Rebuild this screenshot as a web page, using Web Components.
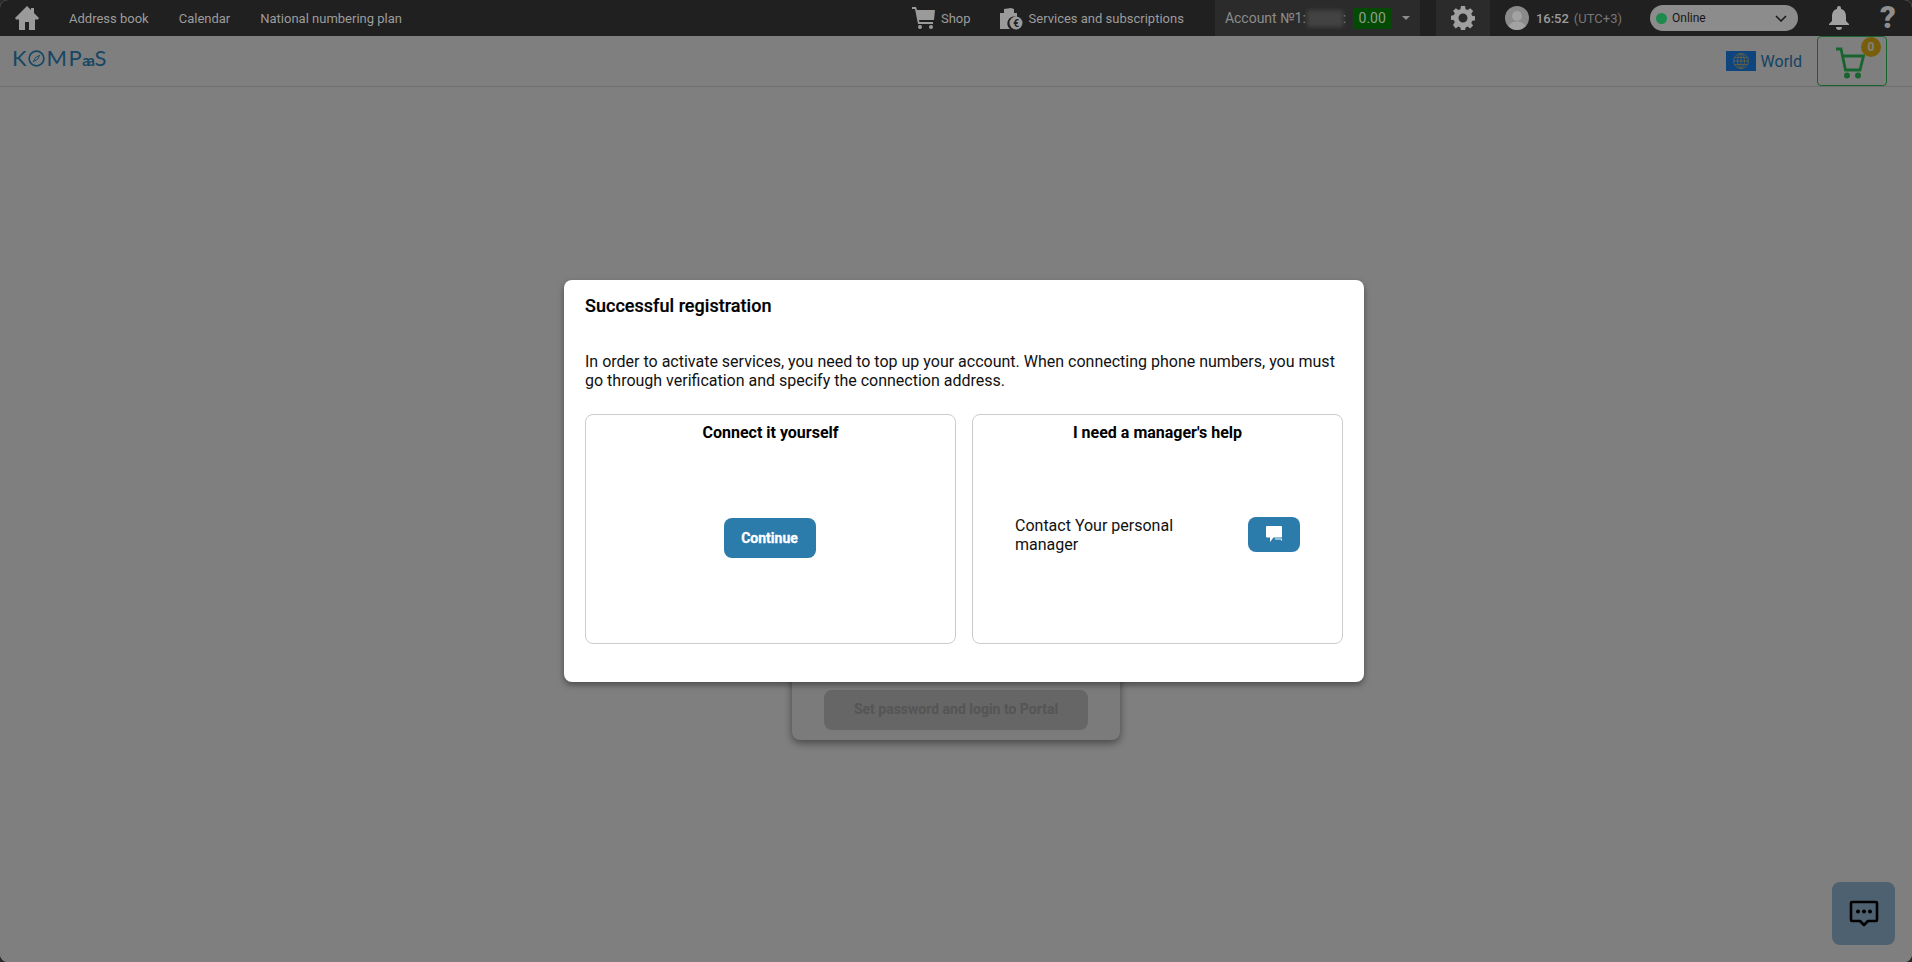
<!DOCTYPE html>
<html lang="en">
<head>
<meta charset="utf-8">
<title>Successful registration</title>
<style>
    html { height: 100%; overflow: hidden; background: #2a2a2a; }
    body { margin: 0; height: 100%; position: relative; overflow: hidden; border-radius: 8px; background: #fff; font-family: Roboto, "Liberation Sans", sans-serif; display: flex; flex-direction: column; }
</style>
</head>
<body>
<app-topbar></app-topbar>
<app-subbar></app-subbar>
<reg-form></reg-form>
<chat-fab></chat-fab>
<reg-modal heading="Successful registration">
    In order to activate services, you need to top up your account. When connecting phone numbers, you must go through verification and specify the connection address.
    <choice-card slot="cards" heading="Connect it yourself">
        <action-button>Continue</action-button>
    </choice-card>
    <choice-card slot="cards" heading="I need a manager's help">
        <manager-contact>Contact Your personal manager</manager-contact>
    </choice-card>
</reg-modal>

<script>
class AppTopbar extends HTMLElement {
    constructor() {
        super();
        this.shadow = this.attachShadow({ mode: 'open' });
    }

    connectedCallback() {
        this.render()
    }

    render() {
        this.shadow.innerHTML = /*html*/ `
            <style>
                :host { display: flex; align-items: center; height: 36px; background: #202020; color: #9c9c9c; font-size: 13px; flex: none; position: relative; z-index: 20; }
                svg { display: block; flex: none; }
                .home { margin-left: 14px; }
                .nav { margin-left: 30px; white-space: nowrap; }
                .nav.first { margin-left: 29px; }
                .spacer { flex: 1; }
                .tool { display: flex; align-items: center; white-space: nowrap; }
                .account { display: flex; align-items: center; height: 36px; width: 205px; box-sizing: border-box; padding-left: 10px; margin-left: 31px; background: #2b2b2b; font-size: 14px; color: #8c8c8c; white-space: nowrap; }
                .blur { display: block; width: 36px; height: 17px; margin-left: 1px; background: #434343; filter: blur(2px); }
                .sum { display: block; margin-left: 7px; width: 38px; height: 21px; line-height: 21px; text-align: center; background: #044a04; color: #8da08d; }
                .caret { margin-left: 11px; width: 0; height: 0; border: 4px solid transparent; border-top: 4px solid #8c8c8c; border-bottom: 0; }
                .gear { display: flex; align-items: center; justify-content: center; width: 54px; height: 36px; margin-left: 16px; background: #2b2b2b; }
                .avatar { margin-left: 15px; }
                .time { margin-left: 7px; font-weight: 500; color: #9c9c9c; }
                .zone { margin-left: 5px; color: #777; }
                .status { display: flex; align-items: center; box-sizing: border-box; width: 148px; height: 26px; margin-left: 28px; padding: 0 11px 0 6px; border-radius: 13px; background: #8c8c8c; color: #161616; font-size: 12px; }
                .dot { width: 11px; height: 11px; border-radius: 50%; background: #1f8a4e; margin-right: 5px; }
                .status span { flex: 1; }
                .bell { margin-left: 31px; }
                .help { margin-left: 28px; margin-right: 13px; width: 22px; text-align: center; font-size: 31px; line-height: 36px; font-weight: 900; color: #8e8e8e; }
            </style>
            <svg class="home" width="26" height="26" viewBox="0 0 26 26"><path fill="#9a9a9a" d="M13 1 1 13l1 1.500h3V25h6v-8h4v8h6V14.500h3L25 13l-5-5V3h-3v2z"/></svg>
            <span class="nav first">Address book</span>
            <span class="nav">Calendar</span>
            <span class="nav">National numbering plan</span>
            <span class="spacer"></span>
            <span class="tool">
                <svg width="23" height="22" viewBox="0 0 23 22"><path fill="#9a9a9a" d="M0 0h4l1 3h18l-1 10H7l.4 2H21v2H6L3 2H0z"/><circle cx="8" cy="20" r="2" fill="#9a9a9a"/><circle cx="19" cy="20" r="2" fill="#9a9a9a"/></svg>
                <span style="margin-left:6px">Shop</span>
            </span>
            <span class="tool" style="margin-left:29px">
                <svg width="23" height="23" viewBox="0 0 23 23"><path fill="#9a9a9a" d="M0 6h4V2l7-1 3 1v4h3v4a7 7 0 0 0-7 12H0z"/><circle cx="16" cy="16" r="6.500" fill="#9a9a9a"/><text x="16" y="19.500" text-anchor="middle" font-size="10" font-weight="700" fill="#202020">€</text></svg>
                <span style="margin-left:6px">Services and subscriptions</span>
            </span>
            <div class="account">
                <span>Account №1:</span><span class="blur"></span><span>:</span><span class="sum">0.00</span><span class="caret"></span>
            </div>
            <div class="gear">
                <svg width="24" height="24" viewBox="0 0 24 24"><path fill="#a0a0a0" fill-rule="evenodd" d="M10 0h4l.6 3.200 2 .8L19.300 2.200l2.800 2.800-1.800 2.700.8 2 3 .6v4l-3 .6-.8 2 1.800 2.700-2.800 2.800-2.700-1.800-2 .8-.6 3.200h-4l-.6-3.200-2-.8-2.700 1.800L2 19l1.800-2.700-.8-2-3-.6v-4l3-.6.8-2L2 5l2.800-2.800L7.400 4l2-.8zM12 7.500a4.500 4.500 0 1 0 0 9 4.500 4.500 0 0 0 0-9z"/></svg>
            </div>
            <svg class="avatar" width="24" height="24" viewBox="0 0 24 24"><circle cx="12" cy="12" r="12" fill="#8a8a8a"/><circle cx="12" cy="10" r="5" fill="#a2a2a2"/><path fill="#a2a2a2" d="M3.500 20.500C5 16.500 8.500 15.500 12 15.500s7 1 8.500 5A12 12 0 0 1 3.500 20.500z"/></svg>
            <span class="time">16:52</span><span class="zone">(UTC+3)</span>
            <div class="status">
                <i class="dot"></i><span>Online</span>
                <svg width="12" height="7" viewBox="0 0 12 7"><path d="M1 1l5 5 5-5" fill="none" stroke="#161616" stroke-width="1.500"/></svg>
            </div>
            <svg class="bell" width="20" height="24" viewBox="0 0 20 24"><path fill="#a0a0a0" d="M10 0a2 2 0 0 1 2 2v1c4 1 5 4 5 8v4l3 3v1H0v-1l3-3v-4c0-4 1-7 5-8V2a2 2 0 0 1 2-2zM7 21h6a3 3 0 0 1-6 0z"/></svg>
            <span class="help">?</span>
        `
    }
}

class AppSubbar extends HTMLElement {
    constructor() {
        super();
        this.shadow = this.attachShadow({ mode: 'open' });
    }

    connectedCallback() {
        this.shadow.innerHTML = /*html*/ `
            <style>
                :host { display: flex; align-items: center; height: 51px; box-sizing: border-box; flex: none; border-bottom: 1px solid #dcdcdc; }
                .logo { display: flex; align-items: center; margin: -6px 0 0 12px; color: #2f8fc8; font: 400 22px/28px Lato, sans-serif; }
                .logo svg { margin: 0 2px 0 1px; }
                .logo .wide { letter-spacing: 1.500px; }
                .logo small { font-size: 15px; letter-spacing: -2.500px; margin: 3px 2px 0 -1px; font-weight: 700; }
                .spacer { flex: 1; }
                .flag { display: flex; align-items: center; justify-content: center; width: 30px; height: 20px; background: #1c8aff; }
                .world { margin-left: 5px; font-size: 16px; color: #2a86c8; }
                .cart { position: relative; display: flex; align-items: center; justify-content: center; box-sizing: border-box; width: 70px; height: 50px; margin: 0 25px 0 15px; border: 1px solid #30c85c; border-radius: 4px; }
                .cart svg { margin: 4px 4px 0 0; }
                .cart b { position: absolute; top: 0; right: 5px; width: 20px; height: 20px; border-radius: 50%; background: #f0bc14; color: #fff; font-size: 12px; line-height: 20px; text-align: center; }
            </style>
            <div class="logo">K<svg width="17" height="17" viewBox="0 0 18 18"><circle cx="9" cy="9" r="7.800" fill="none" stroke="#2f8fc8" stroke-width="1.800"/><path d="M12.500 5.500 10 10 5.500 12.500 8 8z" fill="none" stroke="#2f8fc8"/></svg><span class="wide">MP</span><small>aa</small>S</div>
            <span class="spacer"></span>
            <div class="flag"><svg width="16" height="16" viewBox="0 0 16 16" fill="none" stroke="#d8c878" stroke-width=".8"><circle cx="8" cy="8" r="7.500"/><ellipse cx="8" cy="8" rx="3.500" ry="7.500"/><path d="M8 .5v15M.5 8h15M1.500 4.500h13M1.500 11.500h13"/></svg></div>
            <span class="world">World</span>
            <div class="cart">
                <svg width="30" height="32" viewBox="0 0 30 32" fill="none" stroke="#30c85c" stroke-width="2.800"><path d="M1 2h5l4.500 21H25l3.500-14H8"/><circle cx="12" cy="28.500" r="1.600"/><circle cx="23" cy="28.500" r="1.600"/></svg>
                <b>0</b>
            </div>
        `
    }
}

class RegForm extends HTMLElement {
    constructor() {
        super();
        this.shadow = this.attachShadow({ mode: 'open' });
    }

    connectedCallback() {
        this.shadow.innerHTML = /*html*/ `
            <style>
                :host { display: flex; flex: 1; align-items: flex-start; justify-content: center; padding-top: 221px; }
                .box { box-sizing: border-box; width: 328px; height: 432px; padding: 382px 32px 0; background: #f6f6f6; border-radius: 8px; box-shadow: 0 3px 8px rgba(0,0,0,.45); }
                button { display: block; width: 100%; height: 40px; padding: 0 0 2px; border: 0; border-radius: 8px; background: #ccc; color: #aaa; font: 700 14px Roboto, sans-serif; }
            </style>
            <div class="box"><button>Set password and login to Portal</button></div>
        `
    }
}

class ChatFab extends HTMLElement {
    constructor() {
        super();
        this.shadow = this.attachShadow({ mode: 'open' });
    }

    connectedCallback() {
        this.shadow.innerHTML = /*html*/ `
            <style>
                :host { position: absolute; right: 17px; bottom: 17px; display: flex; align-items: center; justify-content: center; width: 63px; height: 63px; border-radius: 8px; background: #9ac2e0; }
            </style>
            <svg width="30" height="28" viewBox="0 0 30 28"><path fill="none" stroke="#000" stroke-width="2.600" stroke-linejoin="round" d="M3 2h24a1 1 0 0 1 1 1v17a1 1 0 0 1-1 1h-8l-4 4-4-4H3a1 1 0 0 1-1-1V3a1 1 0 0 1 1-1z"/><circle cx="9" cy="11.500" r="2"/><circle cx="15" cy="11.500" r="2"/><circle cx="21" cy="11.500" r="2"/></svg>
        `
    }
}

class RegModal extends HTMLElement {
    constructor() {
        super();
        this.shadow = this.attachShadow({ mode: 'open' });
    }

    connectedCallback() {
        this.shadow.innerHTML = /*html*/ `
            <style>
                :host { position: absolute; inset: 0; z-index: 10; display: flex; align-items: center; justify-content: center; padding-left: 16px; background: rgba(0,0,0,.5); }
                .dialog { box-sizing: border-box; width: 800px; height: 402px; padding: 15px 21px 0; background: #fff; border-radius: 8px; box-shadow: 0 3px 6px rgba(0,0,0,.4); color: #111; }
                h2 { margin: 0; font-size: 18px; line-height: 22px; font-weight: 500; color: #000; -webkit-text-stroke: .2px #000; letter-spacing: .03px; }
                p { margin: 35px 0 0; font-size: 16px; line-height: 19px; }
                .cards { display: flex; gap: 16px; margin-top: 24px; }
            </style>
            <div class="dialog">
                <h2>${this.getAttribute('heading')}</h2>
                <p><slot></slot></p>
                <div class="cards"><slot name="cards"></slot></div>
            </div>
        `
    }
}

class ChoiceCard extends HTMLElement {
    constructor() {
        super();
        this.shadow = this.attachShadow({ mode: 'open' });
    }

    connectedCallback() {
        this.shadow.innerHTML = /*html*/ `
            <style>
                :host { display: flex; flex-direction: column; box-sizing: border-box; width: 371px; height: 230px; border: 1px solid #ccc; border-radius: 8px; }
                h3 { margin: 8px 0 0; font-size: 16px; line-height: 19px; font-weight: 700; text-align: center; color: #000; }
                .body { flex: 1; display: flex; align-items: center; justify-content: center; padding-bottom: 14px; }
            </style>
            <h3>${this.getAttribute('heading')}</h3>
            <div class="body"><slot></slot></div>
        `
    }
}

class ActionButton extends HTMLElement {
    constructor() {
        super();
        this.shadow = this.attachShadow({ mode: 'open' });
    }

    connectedCallback() {
        this.shadow.innerHTML = /*html*/ `
            <style>
                :host { display: flex; align-items: center; justify-content: center; width: 92px; height: 40px; border-radius: 8px; background: #2b7bab; color: #fff; font-size: 14px; font-weight: 700; -webkit-text-stroke: .3px #fff; margin: 5px 2px 0 0; }
            </style>
            <slot></slot>
        `
    }
}

class ManagerContact extends HTMLElement {
    constructor() {
        super();
        this.shadow = this.attachShadow({ mode: 'open' });
    }

    connectedCallback() {
        this.shadow.innerHTML = /*html*/ `
            <style>
                :host { display: flex; align-items: center; justify-content: space-between; width: 285px; font-size: 16px; line-height: 19px; color: #111; margin-top: -3px; }
                .text { width: 180px; padding-top: 2px; }
                .btn { display: flex; align-items: center; justify-content: center; width: 52px; height: 35px; border-radius: 8px; background: #2b7bab; }
                svg { display: block; }
            </style>
            <div class="text"><slot></slot></div>
            <div class="btn">
                <svg width="16" height="16" viewBox="0 0 16 16"><path fill="#fff" d="M1 0h14a1 1 0 0 1 1 1v10.500H7.500L4 16v-4.500H1a1 1 0 0 1-1-1V1a1 1 0 0 1 1-1z"/><path fill="none" stroke="#fff" d="M9 13h6.500v1.500"/></svg>
            </div>
        `
    }
}

customElements.define("app-topbar", AppTopbar)
customElements.define("app-subbar", AppSubbar)
customElements.define("reg-form", RegForm)
customElements.define("chat-fab", ChatFab)
customElements.define("reg-modal", RegModal)
customElements.define("choice-card", ChoiceCard)
customElements.define("action-button", ActionButton)
customElements.define("manager-contact", ManagerContact)
</script>
</body>
</html>
